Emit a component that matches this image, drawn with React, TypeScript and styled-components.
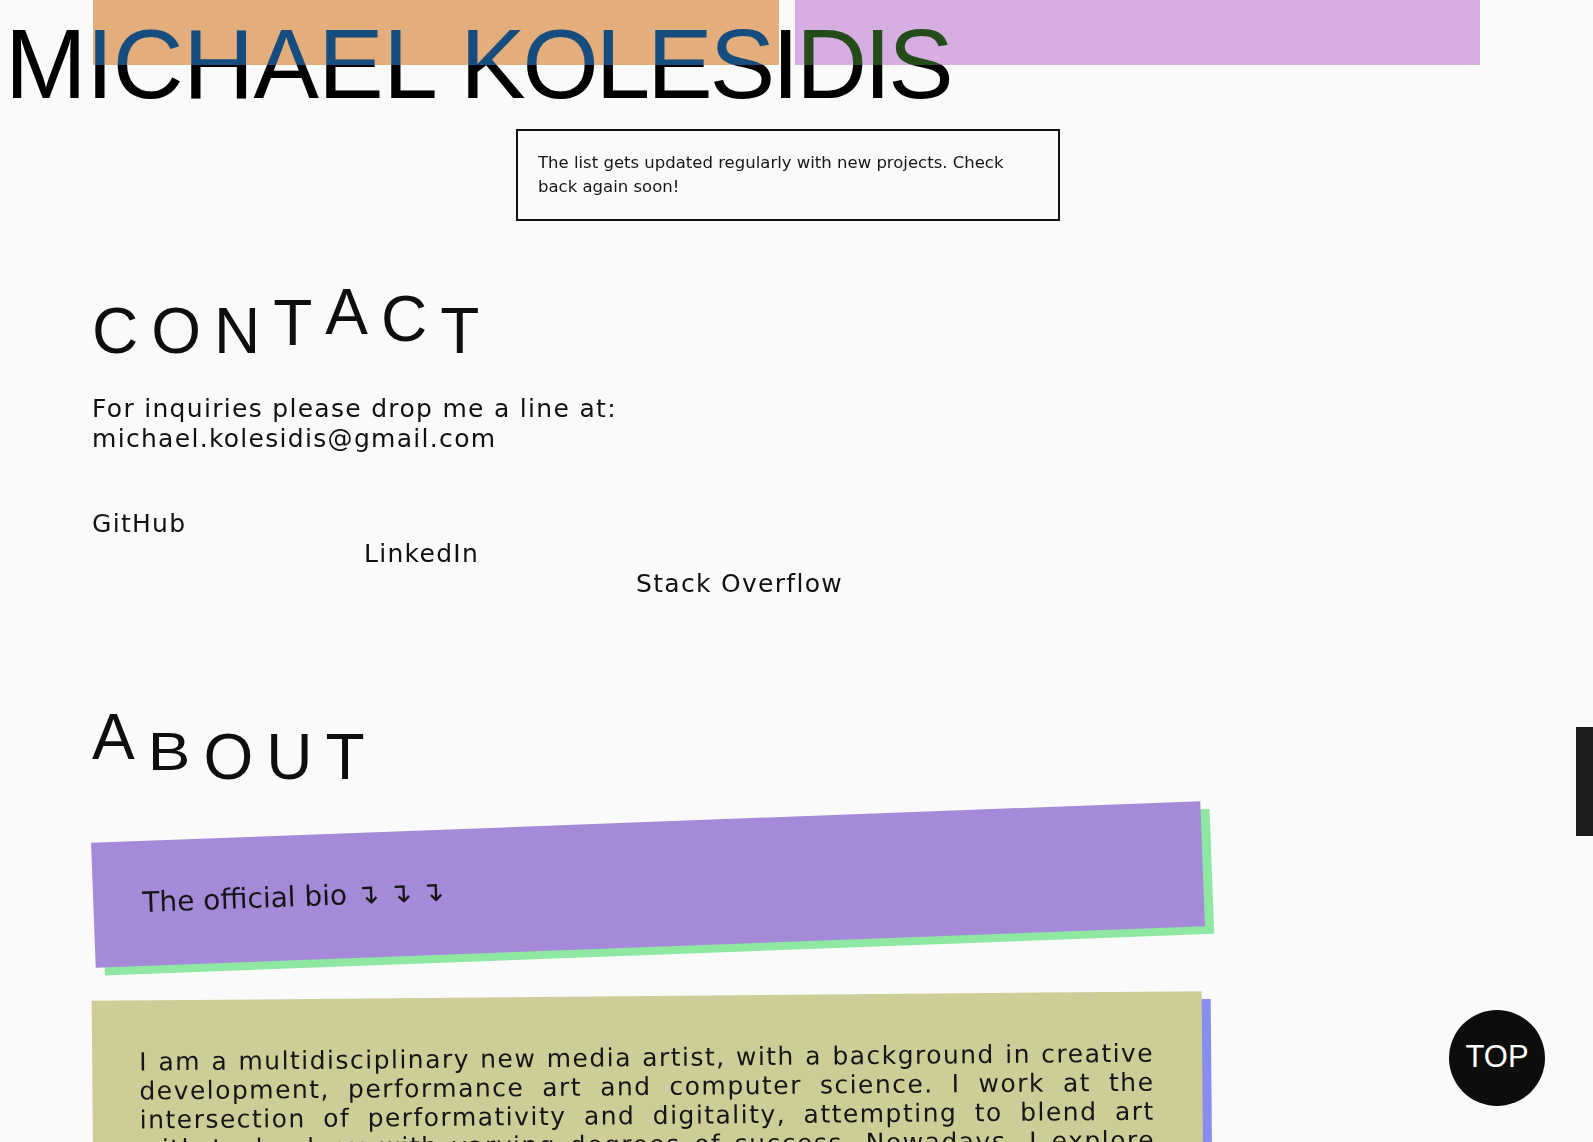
import React from "react";
import styled, { createGlobalStyle } from "styled-components";

const GlobalStyle = createGlobalStyle`
  html, body {
    margin: 0;
    padding: 0;
    height: 100%;
    overflow: hidden;
    background: #fafafa;
  }
  #root { height: 100%; }
  *, *::before, *::after { box-sizing: border-box; }
`;

const Page = styled.div`
  display: flex;
  height: 100vh;
  overflow: hidden;
  background: #fafafa;
  isolation: isolate;
`;

const Main = styled.main`
  flex: 1;
  min-width: 0;
  display: flex;
  flex-direction: column;
`;

const Header = styled.header`
  display: grid;
`;

const ColorBars = styled.div`
  grid-area: 1 / 1;
  display: grid;
  grid-template-columns: 686px 685px;
  column-gap: 16px;
  padding-left: 93px;
  height: 65px;
`;

const ColorBar = styled.div<{ $color: string }>`
  background: ${(p) => p.$color};
`;

const Name = styled.h1`
  grid-area: 1 / 1;
  margin: 0;
  padding: 14.5px 0 0 5px;
  font-family: "Liberation Sans", Arial, sans-serif;
  font-weight: 400;
  font-size: 98px;
  line-height: 1;
  color: #fafafa;
  mix-blend-mode: difference;
  white-space: nowrap;
`;

const NameWord = styled.span<{ $ls: number }>`
  letter-spacing: ${(p) => p.$ls}px;
`;

const Notice = styled.p`
  align-self: center;
  width: 544px;
  margin: 16.5px 0 0;
  padding: 20px 20px 20px;
  border: 2px solid #111;
  font-family: "DejaVu Sans", sans-serif;
  font-size: 16.5px;
  line-height: 24px;
  color: #151515;
`;

const Section = styled.section<{ $top: number }>`
  padding: ${(p) => p.$top}px 0 0 92px;
  display: flex;
  flex-direction: column;
  align-items: flex-start;
`;

const Heading = styled.h2`
  margin: 0;
  font-family: "Liberation Sans", Arial, sans-serif;
  font-weight: 400;
  font-size: 64px;
  line-height: 1;
  letter-spacing: 13px;
  color: #0e0e0e;
  white-space: nowrap;
`;

const Letter = styled.span<{ $t?: string }>`
  display: inline-block;
  transform: ${(p) => p.$t ?? "none"};
  transform-origin: top left;
`;

const Intro = styled.p`
  margin: 31px 0 0;
  font-family: "DejaVu Sans", sans-serif;
  font-size: 25px;
  line-height: 30px;
  letter-spacing: 1.3px;
  color: #111;
`;

const Mail = styled.a`
  color: inherit;
  text-decoration: none;
`;

const LinkRow = styled.div`
  display: flex;
  align-items: flex-start;
  margin-top: 55px;
`;

const SocialLink = styled.a<{ $step: number }>`
  display: block;
  width: 272px;
  margin-top: ${(p) => p.$step * 30}px;
  font-family: "DejaVu Sans", sans-serif;
  font-size: 25px;
  line-height: 30px;
  letter-spacing: 1.3px;
  color: #111;
  text-decoration: none;
  white-space: nowrap;
`;

const Card = styled.div<{
  $bg: string;
  $shadow: string;
  $rotate: number;
  $top: number;
}>`
  width: 1110px;
  margin: ${(p) => p.$top}px 0 0 1px;
  background: ${(p) => p.$bg};
  box-shadow: 9px 8px 0 ${(p) => p.$shadow};
  transform: rotate(${(p) => p.$rotate}deg);
  color: #151515;
  font-family: "DejaVu Sans", sans-serif;
`;

const CardTitle = styled.p`
  margin: 0;
  padding: 45px 49px 46px;
  font-size: 28px;
  line-height: 34px;
`;

const BioText = styled.p`
  margin: 0;
  padding: 47px 48px 60px 47px;
  font-size: 25px;
  line-height: 29px;
  letter-spacing: 1.47px;
  text-align: justify;
`;

const ScrollTrack = styled.div`
  width: 17px;
  flex-shrink: 0;
`;

const ScrollThumb = styled.div`
  margin-top: 727px;
  height: 109px;
  background: #1c1c1a;
`;

const TopButton = styled.button`
  position: fixed;
  right: 48px;
  bottom: 36px;
  width: 96px;
  height: 96px;
  padding: 0 0 3px;
  border: none;
  border-radius: 50%;
  background: #0d0d0d;
  color: #fff;
  font-family: "Liberation Sans", Arial, sans-serif;
  font-size: 31px;
  display: flex;
  align-items: center;
  justify-content: center;
  cursor: pointer;
`;

const contact: { ch: string; t?: string }[] = [
  { ch: "C" },
  { ch: "O" },
  { ch: "N" },
  { ch: "T", t: "translateY(-8px)" },
  { ch: "A", t: "translateY(-19px)" },
  { ch: "C", t: "translateY(-12px)" },
  { ch: "T" },
];

const about: { ch: string; t?: string }[] = [
  { ch: "A", t: "translateY(-20px)" },
  { ch: "B", t: "scaleY(0.83)" },
  { ch: "O" },
  { ch: "U" },
  { ch: "T" },
];

const links = [
  { label: "GitHub", href: "#github" },
  { label: "LinkedIn", href: "#linkedin" },
  { label: "Stack Overflow", href: "#stackoverflow" },
];

export default function App() {
  return (
    <>
      <GlobalStyle />
      <Page>
        <Main>
          <Header>
            <ColorBars>
              <ColorBar $color="#e4ad7c" />
              <ColorBar $color="#d6aee2" />
            </ColorBars>
            <Name>
              <NameWord $ls={-0.5}>MICHAEL </NameWord>
              <NameWord $ls={-3}>KOLESIDIS</NameWord>
            </Name>
          </Header>

          <Notice>
            The list gets updated regularly with new projects. Check back again
            soon!
          </Notice>

          <Section $top={78}>
            <Heading>
              {contact.map((l, i) => (
                <Letter key={i} $t={l.t}>
                  {l.ch}
                </Letter>
              ))}
            </Heading>
            <Intro>
              For inquiries please drop me a line at:
              <br />
              <Mail href="mailto:michael.kolesidis@gmail.com">
                michael.kolesidis@gmail.com
              </Mail>
            </Intro>
            <LinkRow>
              {links.map((l, i) => (
                <SocialLink key={l.label} href={l.href} $step={i}>
                  {l.label}
                </SocialLink>
              ))}
            </LinkRow>
          </Section>

          <Section $top={126}>
            <Heading>
              {about.map((l, i) => (
                <Letter key={i} $t={l.t}>
                  {l.ch}
                </Letter>
              ))}
            </Heading>
            <Card $bg="#a48ad9" $shadow="#8fe8a2" $rotate={-2.15} $top={33}>
              <CardTitle>The official bio ↴ ↴ ↴</CardTitle>
            </Card>
            <Card $bg="#cdcd98" $shadow="#8a8cf0" $rotate={-0.5} $top={49}>
              <BioText>
                I am a multidisciplinary new media artist, with a background in
                creative development, performance art and computer science. I
                work at the intersection of performativity and digitality,
                attempting to blend art with technology with varying degrees of
                success. Nowadays, I explore the expressive potential of code,
                the web and the moving image, building playful interactive
                experiences, generative visuals and tools for other artists.
              </BioText>
            </Card>
          </Section>
        </Main>
        <ScrollTrack>
          <ScrollThumb />
        </ScrollTrack>
        <TopButton type="button">TOP</TopButton>
      </Page>
    </>
  );
}
